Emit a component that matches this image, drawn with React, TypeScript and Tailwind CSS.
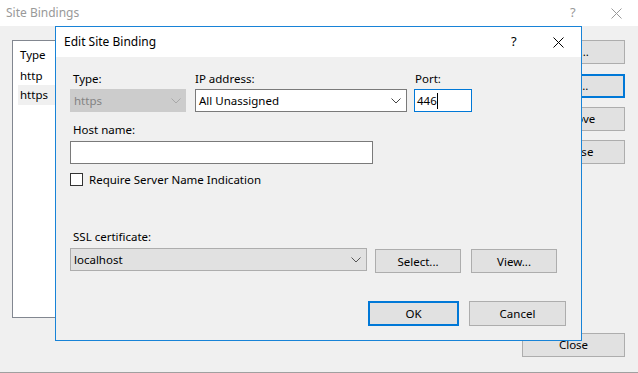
import React from 'react'

const font = { fontFamily: '"Noto Sans", "Liberation Sans", sans-serif' }

const Chevron = ({ color = '#333' }: { color?: string }) => (
  <svg width="10" height="6" viewBox="0 0 10 6" className="shrink-0">
    <path d="M0.5 0.5 L5 5 L9.5 0.5" fill="none" stroke={color} strokeWidth="1" />
  </svg>
)

const CloseX = ({ color = '#000' }: { color?: string }) => (
  <svg width="11" height="11" viewBox="0 0 11 11">
    <path d="M0.5 0.5 L10.5 10.5 M10.5 0.5 L0.5 10.5" fill="none" stroke={color} strokeWidth="1" />
  </svg>
)

const Button = ({ label, focused, className = '' }: { label: string; focused?: boolean; className?: string }) => (
  <div
    className={`flex items-center justify-center bg-[#e1e1e1] text-[11.5px] text-black ${focused ? 'border-2 border-[#0078d7]' : 'border border-[#adadad]'
      } ${className}`}
  >
    {label}
  </div>
)

const EditBinding = () => {
  return (
    <div className="absolute left-[55px] top-[26px] w-[527px] h-[315px] border border-[#1883d7] bg-[#f0f0f0] flex flex-col">
      {/* title bar */}
      <div className="h-[30px] bg-white flex items-center pl-[8px] shrink-0">
        <span className="text-[12px] text-black flex-1">Edit Site Binding</span>
        <span className="text-[13px] text-black w-[12px] mr-[30px]">?</span>
        <div className="mr-[17px] flex items-center"><CloseX /></div>
      </div>

      <div className="flex flex-col pl-[14px] pt-[14px] text-[11.5px]">
        {/* type / ip / port */}
        <div className="flex items-end">
          <div className="flex flex-col w-[116px]">
            <span className="text-black pl-[3px] leading-[16px] mb-[2px]">Type:</span>
            <div className="h-[23px] bg-[#cccccc] border border-[#cccccc] flex items-center pl-[3px] pr-[4px]">
              <span className="text-[#838383] flex-1">https</span>
              <Chevron color="#a8a8a8" />
            </div>
          </div>
          <div className="flex flex-col w-[212px] ml-[9px]">
            <span className="text-black leading-[16px] mb-[2px]">IP address:</span>
            <div className="h-[23px] bg-white border border-[#7a7a7a] flex items-center pl-[3px] pr-[5px]">
              <span className="text-black flex-1">All Unassigned</span>
              <Chevron color="#444" />
            </div>
          </div>
          <div className="flex flex-col w-[58px] ml-[7px]">
            <span className="text-black pl-[1px] leading-[16px] mb-[2px]">Port:</span>
            <div className="h-[23px] bg-white border border-[#0078d7] flex items-center pl-[2px]">
              <span className="text-black">446</span>
              <span className="w-px h-[16px] bg-black" />
            </div>
          </div>
        </div>

        {/* host name */}
        <span className="text-black pl-[3px] leading-[16px] mt-[10px] mb-[3px]">Host name:</span>
        <div className="h-[23px] w-[303px] bg-white border border-[#7a7a7a]" />

        <div className="flex items-center mt-[7px]">
          <div className="w-[13px] h-[13px] bg-white border border-[#333]" />
          <span className="text-black ml-[6px]">Require Server Name Indication</span>
        </div>

        {/* ssl */}
        <span className="text-black pl-[3px] leading-[16px] mt-[41px] mb-[3px]">SSL certificate:</span>
        <div className="flex items-start">
          <div className="h-[23px] w-[297px] bg-[#e1e1e1] border border-[#adadad] flex items-center pl-[3px] pr-[5px]">
            <span className="text-black flex-1">localhost</span>
            <Chevron color="#555" />
          </div>
          <Button label="Select..." className="w-[86px] h-[24px] ml-[8px] mt-px" />
          <Button label="View..." className="w-[86px] h-[24px] ml-[10px] mt-px" />
        </div>

        <div className="flex mt-[28px] ml-[298px]">
          <Button label="OK" focused className="w-[91px] h-[25px]" />
          <Button label="Cancel" className="w-[97px] h-[25px] ml-[10px]" />
        </div>
      </div>
    </div>
  )
}

export default function App() {
  return (
    <div style={font} className="relative w-[638px] h-[373px] bg-[#f0f0f0] overflow-hidden flex flex-col">
      {/* background window title */}
      <div className="h-[26px] bg-white flex items-center pl-[6px] shrink-0">
        <span className="text-[12px] text-[#999999] flex-1">Site Bindings</span>
        <span className="text-[13px] text-[#999999] w-[12px] mr-[29px]">?</span>
        <div className="mr-[16px] flex items-center"><CloseX color="#999999" /></div>
      </div>

      <div className="flex flex-1 pt-[14px] pl-[12px] pr-[13px] text-[11.5px]">
        {/* list box */}
        <div className="w-[60px] h-[278px] bg-white border border-r-0 border-[#828790] flex flex-col pt-[5px]">
          <span className="text-black pl-[7px] leading-[18px]">Type</span>
          <span className="text-black pl-[7px] leading-[18px] mt-[3px]">http</span>
          <div className="ml-[5px] bg-[#f0f0f0] h-[20px] flex items-center pl-[2px]">
            <span className="text-black">https</span>
          </div>
        </div>

        <div className="flex-1" />

        <div className="flex flex-col w-[103px]">
          <Button label="Add..." className="h-[24px]" />
          <Button label="Edit..." focused className="h-[24px] mt-[10px]" />
          <Button label="Remove" className="h-[24px] mt-[9px]" />
          <Button label="Browse" className="h-[24px] mt-[9px]" />
          <div className="flex-1" />
          <Button label="Close" className="h-[24px] mb-[15px]" />
        </div>
      </div>
      <div className="h-px bg-[#a0a0a0] shrink-0" />

      <EditBinding />
    </div>
  )
}
